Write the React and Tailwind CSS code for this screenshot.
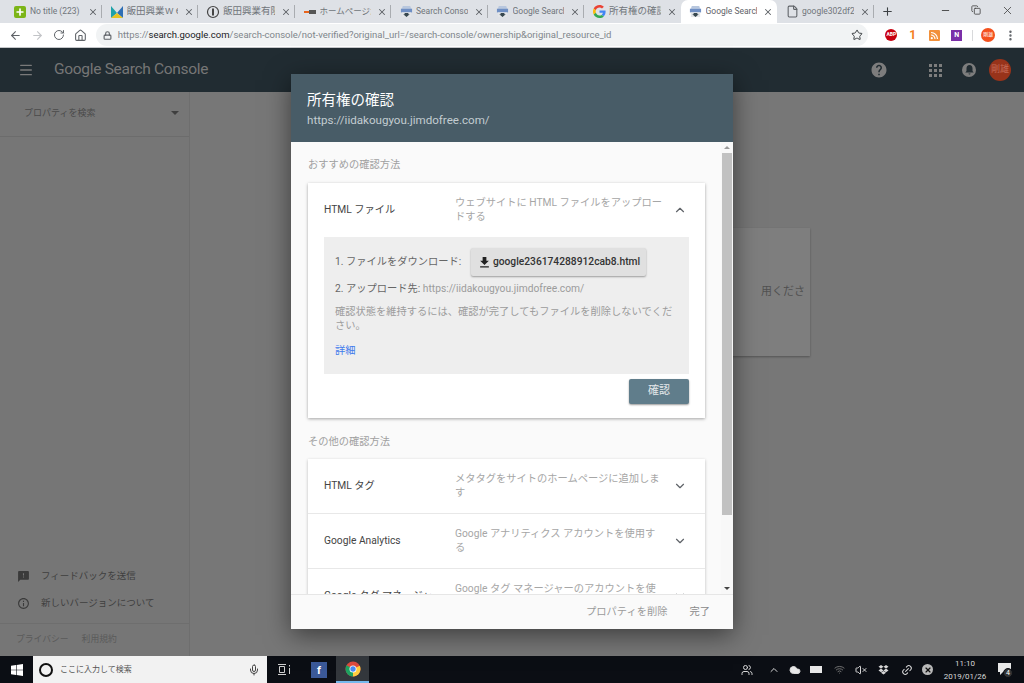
import {
  ArrowLeft,
  ArrowRight,
  RotateCw,
  Home,
  Lock,
  Star,
  X,
  Plus,
  File,
  MoreVertical,
  Menu,
  ChevronUp,
  ChevronDown,
  Minus,
  Copy,
  Mic,
  Users,
  Cloud,
  Wifi,
  VolumeX,
  Link2,
} from "lucide-react";

const FONT = "font-['Roboto','Noto_Sans_CJK_JP',sans-serif]";

function SearchFavicon() {
  return (
    <svg width="13" height="13" viewBox="0 0 14 14">
      <path d="M3 1h8l1 3H2z" fill="#b8c7de" />
      <rect x="1" y="4" width="12" height="4" fill="#6f8fc4" />
      <rect x="2" y="8" width="10" height="5" fill="#e3e5e8" />
      <path d="M5 8.500h4v1.500h1.500L7 13 3.500 10H5z" fill="#37474f" />
    </svg>
  );
}

function GoogleG() {
  return (
    <svg width="13" height="13" viewBox="0 0 48 48">
      <path fill="#EA4335" d="M24 9.500c3.500 0 6.700 1.200 9.200 3.600l6.900-6.900C35.900 2.400 30.500 0 24 0 14.600 0 6.500 5.400 2.600 13.200l8 6.200C12.500 13.700 17.800 9.500 24 9.500z" />
      <path fill="#4285F4" d="M46.500 24.500c0-1.600-.1-3.100-.4-4.500H24v9h12.700c-.6 2.900-2.200 5.400-4.700 7l7.300 5.700c4.300-4 7.200-9.900 7.200-17.200z" />
      <path fill="#FBBC05" d="M10.600 28.600c-.5-1.400-.8-3-.8-4.600s.3-3.200.8-4.600l-8-6.200C.9 16.500 0 20.100 0 24s.9 7.500 2.600 10.800l8-6.200z" />
      <path fill="#34A853" d="M24 48c6.500 0 11.900-2.100 15.900-5.800L32.600 36.500c-2.100 1.400-4.900 2.300-8.600 2.300-6.200 0-11.500-4.200-13.400-9.900l-8 6.200C6.500 42.600 14.600 48 24 48z" />
    </svg>
  );
}

const TABS = [
  {
    title: "No title (223)",
    size: "text-[8.500px]",
    icon: (
      <span className="w-[12px] h-[12px] rounded-[2px] bg-[#7cb518] flex items-center justify-center">
        <Plus size={10} strokeWidth={4} className="text-white" />
      </span>
    ),
  },
  {
    title: "飯田興業ｗｅｂ",
    size: "text-[9.500px]",
    icon: (
      <svg width="14" height="14" viewBox="0 0 14 14">
        <path d="M1 1l6 7-6 5z" fill="#1fa2a8" />
        <path d="M13 1L7 8l6 5z" fill="#2f6fb5" />
        <path d="M1 13l6-5 6 5z" fill="#e8c320" />
      </svg>
    ),
  },
  {
    title: "飯田興業有限会社",
    size: "text-[9.500px]",
    icon: (
      <svg width="14" height="14" viewBox="0 0 14 14">
        <circle cx="7" cy="7" r="5.500" fill="none" stroke="#444" strokeWidth="1.200" />
        <rect x="6" y="3.500" width="2" height="7" fill="#444" />
      </svg>
    ),
  },
  {
    title: "ホームページが公",
    size: "text-[8.500px]",
    icon: (
      <svg width="14" height="14" viewBox="0 0 14 14">
        <rect x="1" y="6" width="5" height="2" fill="#e8641c" />
        <rect x="6" y="5" width="7" height="4" fill="#555" />
      </svg>
    ),
  },
  { title: "Search Console", size: "text-[8.500px]", icon: <SearchFavicon /> },
  { title: "Google Search", size: "text-[8.500px]", icon: <SearchFavicon /> },
  { title: "所有権の確認 -", size: "text-[9.500px]", icon: <GoogleG /> },
  { title: "Google Search", size: "text-[8.500px]", icon: <SearchFavicon />, active: true },
  { title: "google302df2c", size: "text-[8.500px]", icon: <File size={13} className="text-[#5f6368]" /> },
];

function Tab({ tab }) {
  return (
    <div
      className={
        "w-[96.500px] shrink-0 h-[23px] flex items-center pl-[8px] pr-[4px] gap-[3px] " +
        (tab.active ? "bg-white rounded-t-[7px]" : "")
      }
    >
      <span className="w-[14px] flex justify-center shrink-0">{tab.icon}</span>
      <span
        className={
          "flex-1 min-w-0 overflow-hidden whitespace-nowrap " +
          tab.size +
          (tab.active ? " text-[#5f6368]" : " text-[#70757a]")
        }
      >
        {tab.title}
      </span>
      <X size={10} strokeWidth={2.500} className="text-[#5f6368] shrink-0 ml-[3px]" />
    </div>
  );
}

function TabStrip() {
  return (
    <div className="h-[23px] bg-[#dee1e6] flex items-end pl-[5px]">
      {TABS.map((t, i) => (
        <div key={i} className="flex items-center">
          <Tab tab={t} />
          {i < 8 && !t.active && !TABS[i + 1]?.active && (
            <div className="w-px h-[13px] bg-[#a9acb0] -ml-px" />
          )}
        </div>
      ))}
      <div className="w-px h-[13px] bg-[#a9acb0] self-center -ml-px" />
      <Plus size={13} strokeWidth={2} className="text-[#3c4043] ml-[7px] self-center" />
      <div className="flex-1" />
      <div className="flex items-center self-start h-[20px] gap-[20px] pr-[10px]">
        <Minus size={11} className="text-[#444]" />
        <Copy size={10} className="text-[#444]" />
        <X size={13} strokeWidth={1.500} className="text-[#444]" />
      </div>
    </div>
  );
}

function Toolbar() {
  return (
    <div className="h-[25px] bg-white flex items-center pl-[9px] pr-[7px] border-b border-[#c4c6c9]">
      <ArrowLeft size={13} className="text-[#5f6368]" />
      <ArrowRight size={13} className="text-[#c2c4c7] ml-[9px]" />
      <RotateCw size={12} className="text-[#5f6368] ml-[9px]" />
      <Home size={13} className="text-[#5f6368] ml-[9px]" />
      <div className="ml-[9px] w-[777px] h-[22px] rounded-full bg-[#f1f3f4] flex items-center pl-[7px] pr-[5px]">
        <Lock size={9} strokeWidth={3} className="text-[#5f6368]" />
        <span className="ml-[6px] text-[9.500px] text-[#80868b] whitespace-nowrap flex-1">
          https://<span className="text-[#202124]">search.google.com</span>/search-console/not-verified?original_url=/search-console/ownership&amp;original_resource_id
        </span>
        <Star size={12} className="text-[#3c4043]" />
      </div>
      <span className="ml-[17px] w-[12px] h-[12px] rounded-full bg-[#c8000f] text-white text-[5px] font-bold flex items-center justify-center">
        ABP
      </span>
      <span className="ml-[12px] w-[6px] text-[12px] font-bold text-[#f4801f]">1</span>
      <span className="ml-[14px]">
        <svg width="11" height="11" viewBox="0 0 11 11" className="block">
          <rect width="11" height="11" rx="1" fill="#f2903a" />
          <circle cx="2.800" cy="8.200" r="1.100" fill="#fff" />
          <path d="M2 5a4 4 0 0 1 4 4M2 2.500A6.500 6.500 0 0 1 8.500 9" fill="none" stroke="#fff" strokeWidth="1.200" />
        </svg>
      </span>
      <span className="ml-[11px] w-[11px] h-[11px] bg-[#7b2fa8] text-white text-[7px] font-bold flex items-center justify-center">
        N
      </span>
      <div className="ml-[10px] w-px h-[11px] bg-[#d8d9db]" />
      <span className="ml-[8px] w-[14px] h-[14px] rounded-full bg-[#f4511e] text-white text-[5px] flex items-center justify-center">
        剛雄
      </span>
      <MoreVertical size={13} strokeWidth={2.500} className="text-[#5f6368] ml-[9px]" />
    </div>
  );
}

function AppBar() {
  return (
    <div className="h-[44px] bg-[#212c32] flex items-center pl-[18px] pr-[13px] shrink-0 shadow-[0_1px_0_#5a5a5a]">
      <Menu size={16} strokeWidth={2} className="text-[#7a7a7a]" />
      <span className="ml-[20px] text-[15.500px] text-[#767676] tracking-[-0.3px]">
        Google Search Console
      </span>
      <div className="flex-1" />
      <svg width="18" height="18" viewBox="0 0 24 24" fill="#7d7d7d">
        <path d="M12 2C6.480 2 2 6.480 2 12s4.480 10 10 10 10-4.480 10-10S17.520 2 12 2zm1 17h-2v-2h2v2zm2.070-7.750l-.9.920C13.450 12.900 13 13.500 13 15h-2v-.5c0-1.100.45-2.100 1.170-2.830l1.240-1.260c.37-.36.59-.86.59-1.410 0-1.100-.9-2-2-2s-2 .9-2 2H8c0-2.210 1.790-4 4-4s4 1.790 4 4c0 .88-.36 1.680-.93 2.250z" />
      </svg>
      <div className="ml-[41px] grid grid-cols-3 gap-[2px]">
        {Array.from({ length: 9 }).map((_, i) => (
          <span key={i} className="w-[3px] h-[3px] bg-[#7d7d7d]" />
        ))}
      </div>
      <span className="ml-[20px] w-[14px] h-[14px] rounded-full bg-[#7d7d7d] flex items-center justify-center">
        <svg width="9" height="10" viewBox="0 0 9 10" fill="#212c32">
          <path d="M4.500 0C2.600 0 1.500 1.500 1.500 3.500V6L.3 7.500h8.400L7.500 6V3.500C7.500 1.500 6.400 0 4.500 0zM3.500 8.500h2a1 1 0 0 1-2 0z" />
        </svg>
      </span>
      <span className="ml-[13px] w-[22px] h-[22px] rounded-full bg-[#98331a] text-[#c46a55] text-[9px] flex items-center justify-center">
        剛雄
      </span>
    </div>
  );
}

function Sidebar() {
  return (
    <div className="w-[190px] shrink-0 bg-[#767676] border-r border-[#6e6e6e] flex flex-col text-[#3f3f3f]">
      <div className="h-[45px] border-b border-[#6c6c6c] flex items-center pl-[24px] pr-[10px] text-[9px] text-[#4a4a4a]">
        <span className="flex-1 mb-[1px]">プロパティを検索</span>
        <span className="w-0 h-0 mb-[3px] border-x-[4px] border-x-transparent border-t-[4px] border-t-[#3f3f3f]" />
      </div>
      <div className="flex-1" />
      <div className="flex items-center h-[27px] pl-[17px] gap-[11px] text-[9.500px]">
        <svg width="13" height="13" viewBox="0 0 24 24" fill="#3a3a3a">
          <path d="M20 2H4c-1.100 0-1.990.9-1.990 2L2 22l4-4h14c1.100 0 2-.9 2-2V4c0-1.100-.9-2-2-2zm-7 12h-2v-2h2v2zm0-4h-2V6h2v4z" />
        </svg>
        フィードバックを送信
      </div>
      <div className="flex items-center h-[27px] pl-[17px] gap-[11px] text-[9.500px] mb-[6px]">
        <svg width="13" height="13" viewBox="0 0 24 24" fill="#3a3a3a">
          <path d="M11 7h2v2h-2zm0 4h2v6h-2zm1-9C6.480 2 2 6.480 2 12s4.480 10 10 10 10-4.480 10-10S17.520 2 12 2zm0 18c-4.410 0-8-3.590-8-8s3.590-8 8-8 8 3.590 8 8-3.590 8-8 8z" />
        </svg>
        新しいバージョンについて
      </div>
      <div className="h-[33px] border-t border-[#6e6e6e] flex items-center pl-[16px] gap-[13px] text-[8.800px] text-[#5a5a5a] pb-[1px]">
        <span>プライバシー</span>
        <span>利用規約</span>
      </div>
    </div>
  );
}

function MethodRow({ title, desc, open, children }) {
  return (
    <div>
      <div className="h-[54px] flex items-center pl-[16px] pr-[16px]">
        <div className="w-[131px] text-[10.250px] text-[#444] whitespace-nowrap overflow-hidden pr-[2px]">{title}</div>
        <div className="w-[210px] text-[10.250px] leading-[14px] text-[#a6a6a6]">{desc}</div>
        <div className="flex-1 flex justify-end pr-[2px]">
          {open ? (
            <ChevronUp size={14} className="text-[#5f6368]" />
          ) : (
            <ChevronDown size={14} className="text-[#5f6368]" />
          )}
        </div>
      </div>
      {children}
    </div>
  );
}

function VerifyModal() {
  return (
    <div className="absolute left-[291px] top-[74px] w-[442px] h-[555px] flex flex-col bg-[#fafafa] shadow-[0_6px_24px_rgba(0,0,0,0.5)]">
      <div className="h-[68px] shrink-0 bg-[#485c67] pl-[16px] pt-[18px]">
        <div className="text-[14.500px] leading-[18px] text-white">所有権の確認</div>
        <div className="mt-[2px] text-[11.600px] leading-[16px] text-[#c3ccd1]">
          https://iidakougyou.jimdofree.com/
        </div>
      </div>

      <div className="flex-1 min-h-0 flex">
        <div className="flex-1 min-w-0 overflow-hidden pl-[17px] pr-[16px]">
          <div className="h-[41px] pt-[15px] text-[10.250px] leading-[15px] text-[#a0a0a0]">
            おすすめの確認方法
          </div>
          <div className="bg-white shadow-[0_1px_3px_rgba(0,0,0,0.35)] h-[235px]">
            <MethodRow title="HTML ファイル" desc="ウェブサイトに HTML ファイルをアップロードする" open>
              <div className="mx-[16px] h-[137px] bg-[#eeeeee] px-[11px] pt-[11px] text-[10.250px] text-[#9c9c9c]">
                <div className="flex items-center">
                  <span className="w-[136px] text-[#666] whitespace-nowrap">1. ファイルをダウンロード:</span>
                  <span className="w-[175px] h-[28px] rounded-[2px] bg-[#e0e0e0] shadow-[0_1px_2px_rgba(0,0,0,0.35)] flex items-center justify-center gap-[1px] font-medium text-[#333]">
                    <svg width="15" height="15" viewBox="0 0 24 24" fill="#222">
                      <path d="M19 9h-4V3H9v6H5l7 7 7-7zM5 18v2h14v-2H5z" />
                    </svg>
                    google236174288912cab8.html
                  </span>
                </div>
                <div className="mt-[5px] leading-[15px] whitespace-nowrap">
                  <span className="text-[#666]">2. アップロード先:</span> https://iidakougyou.jimdofree.com/
                </div>
                <div className="mt-[9px] leading-[14px] w-[342px]">
                  確認状態を維持するには、確認が完了してもファイルを削除しないでください。
                </div>
                <div className="mt-[10px] leading-[15px] text-[#3f7bec]">詳細</div>
              </div>
              <div className="flex justify-end pr-[16px] pt-[5px]">
                <span className="w-[60px] h-[25px] rounded-[2px] bg-[#607d8b] shadow-[0_1px_2px_rgba(0,0,0,0.4)] flex items-center justify-center text-[11px] text-[#e4e8ea]">
                  確認
                </span>
              </div>
            </MethodRow>
          </div>
          <div className="h-[41px] pt-[16px] text-[10.250px] leading-[15px] text-[#a0a0a0]">
            その他の確認方法
          </div>
          <div className="bg-white shadow-[0_1px_3px_rgba(0,0,0,0.25)] divide-y divide-[#e8e8e8]">
            <MethodRow title="HTML タグ" desc="メタタグをサイトのホームページに追加します" />
            <MethodRow title="Google Analytics" desc="Google アナリティクス アカウントを使用する" />
            <MethodRow title="Google タグ マネージャー" desc="Google タグ マネージャーのアカウントを使用する" />
          </div>
        </div>
        {/* scrollbar */}
        <div className="w-[12px] shrink-0 flex flex-col items-center bg-[#f8f8f8]">
          <span className="h-[11px] flex items-center">
            <span className="w-0 h-0 border-x-[3px] border-x-transparent border-b-[3px] border-b-[#9a9a9a]" />
          </span>
          <span className="w-[10px] h-[362px] bg-[#c1c1c1]" />
          <span className="flex-1" />
          <span className="h-[11px] flex items-center">
            <span className="w-0 h-0 border-x-[3px] border-x-transparent border-t-[3px] border-t-[#444]" />
          </span>
        </div>
      </div>

      <div className="h-[35px] shrink-0 bg-[#fafafa] border-t border-[#e6e6e6] flex items-center justify-end pr-[23px] text-[10.250px] text-[#9a9a9a]">
        <span>プロパティを削除</span>
        <span className="ml-[22px] text-[#8a8a8a]">完了</span>
      </div>
    </div>
  );
}

function TrayIcon({ children, className }) {
  return <span className={"flex items-center justify-center text-[#d8d8d8] " + className}>{children}</span>;
}

function Taskbar() {
  return (
    <div className="h-[27px] shrink-0 bg-[#0b0e14] flex items-center">
      <div className="w-[33px] flex justify-center">
        <svg width="12" height="12" viewBox="0 0 12 12" fill="#fff">
          <path d="M0 1.700l5-.7v4.700H0zM5.600.9L12 0v5.700H5.600zM0 6.300h5V11l-5-.7zM5.600 6.300H12V12l-6.400-.9z" />
        </svg>
      </div>
      <div className="w-[234px] h-full bg-[#f2f2f2] flex items-center pl-[6px] pr-[7px]">
        <span className="w-[14px] h-[14px] rounded-full border-[2px] border-[#111]" />
        <span className="ml-[7px] flex-1 text-[8px] text-[#555]">ここに入力して検索</span>
        <Mic size={12} className="text-[#444]" />
      </div>
      <div className="w-[35px] flex justify-center">
        <svg width="13" height="11" viewBox="0 0 13 11" fill="none" stroke="#cfcfcf">
          <path d="M0 .5h8M0 10.500h8M1.500 2.500h5v6h-5zM11.500 1v1.500M11.500 4v6" />
        </svg>
      </div>
      <div className="w-[34px] flex justify-center">
        <span className="w-[16px] h-[16px] bg-[#3b5998] text-white text-[11px] font-bold flex items-end justify-center leading-[14px]">
          f
        </span>
      </div>
      <div className="w-[33px] h-full bg-[#33373c] border-b-[2px] border-[#76b9ed] flex items-center justify-center">
        <svg width="16" height="16" viewBox="0 0 16 16">
          <circle cx="8" cy="8" r="7.500" fill="#dd4b3e" />
          <path d="M8 8l6.800-3.200A7.500 7.500 0 0 1 8 15.500z" fill="#ffcd40" />
          <path d="M8 8v7.500A7.500 7.500 0 0 1 1.500 4.300z" fill="#1da261" />
          <circle cx="8" cy="8" r="3.500" fill="#fff" />
          <circle cx="8" cy="8" r="2.700" fill="#4a8af4" />
        </svg>
      </div>
      <div className="flex-1" />
      <TrayIcon className="w-[14px] mr-[14px]"><Users size={12} /></TrayIcon>
      <TrayIcon className="w-[12px] mr-[9px]"><ChevronUp size={12} /></TrayIcon>
      <TrayIcon className="w-[12px] mr-[9px]"><Cloud size={12} fill="#e8e8e8" /></TrayIcon>
      <span className="w-[12px] h-[7px] bg-[#e8e8e8] mr-[11px]" />
      <TrayIcon className="w-[12px] mr-[10px]"><Wifi size={11} className="text-[#777]" /></TrayIcon>
      <TrayIcon className="w-[12px] mr-[10px]"><VolumeX size={12} /></TrayIcon>
      <TrayIcon className="w-[12px] mr-[12px]">
        <svg width="11" height="10" viewBox="0 0 11 10" fill="#d8d8d8">
          <path d="M3 0l2.500 1.800L3 3.600.5 1.800zM8 0l2.500 1.800L8 3.600 5.500 1.800zM3 3.600l2.500 1.800L3 7.200.5 5.400zM8 3.600l2.500 1.800L8 7.200 5.500 5.400zM3 7.800l2.500-1.700L8 7.800 5.500 9.500z" />
        </svg>
      </TrayIcon>
      <TrayIcon className="w-[12px] mr-[9px]"><Link2 size={12} className="-rotate-45" /></TrayIcon>
      <span className="w-[11px] h-[11px] rounded-full bg-[#b9b9b9] flex items-center justify-center mr-[7px]">
        <X size={8} strokeWidth={3.500} className="text-[#111]" />
      </span>
      <div className="w-[50px] text-center text-[8px] leading-[13px] text-[#d8d8d8]">
        <div>11:10</div>
        <div>2019/01/26</div>
      </div>
      <div className="relative w-[34px] flex justify-center pr-[4px]">
        <svg width="14" height="13" viewBox="0 0 14 13" fill="#e8e8e8">
          <path d="M0 0h13v9H5l-3 3V9H0z" />
        </svg>
        <span className="absolute left-[13px] top-[5px] w-[10px] h-[10px] rounded-full bg-[#333] border border-[#0b0e14] text-white text-[7px] leading-[8px] text-center">
          4
        </span>
      </div>
    </div>
  );
}

export default function App() {
  return (
    <div className={"relative h-[683px] w-[1024px] overflow-hidden flex flex-col " + FONT}>
      <TabStrip />
      <Toolbar />
      <AppBar />
      <div className="flex-1 min-h-0 flex bg-[#777777]">
        <Sidebar />
        <div className="flex-1 min-w-0 flex justify-end pt-[136px] pr-[214px]">
          <div className="w-[200px] h-[128px] bg-[#7e7e7e] shadow-[0_1px_2px_rgba(0,0,0,0.3)] overflow-hidden">
            <div className="mt-[56px] text-right pr-[5px] text-[11px] text-[#515151] whitespace-nowrap">用くださ</div>
          </div>
        </div>
      </div>
      <Taskbar />
      <VerifyModal />
    </div>
  );
}
